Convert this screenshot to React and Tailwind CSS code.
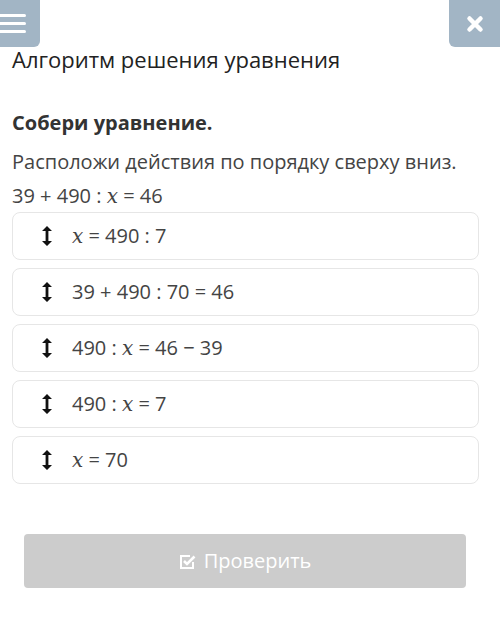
import React from "react";

const X = () => (
  <span style={{ fontFamily: '"DejaVu Serif", "Liberation Serif", serif' }} className="italic">x</span>
);

const Arrow = () => (
  <svg width="10" height="20" viewBox="0 0 10 20" className="shrink-0">
    <path d="M5 0 L10 5 L6.4 5 L6.4 15 L10 15 L5 20 L0 15 L3.6 15 L3.6 5 L0 5 Z" fill="#111" />
  </svg>
);

const rows = [
  <><X /> = 490 : 7</>,
  <>39 + 490 : 70 = 46</>,
  <>490 : <X /> = 46 − 39</>,
  <>490 : <X /> = 7</>,
  <><X /> = 70</>,
];

export default function App() {
  return (
    <div className="w-[500px] h-[622px] bg-white overflow-hidden" style={{ fontFamily: '"Open Sans", "Noto Sans", sans-serif' }}>
      <div className="flex justify-between h-[47px]">
        <div className="w-[40px] h-[47px] bg-[#a2b5c5] rounded-br-[6px] flex flex-col justify-center gap-[5px]">
          <div className="w-[26px] h-[3px] bg-white rounded-r-sm" />
          <div className="w-[26px] h-[3px] bg-white rounded-r-sm" />
          <div className="w-[26px] h-[3px] bg-white rounded-r-sm" />
        </div>
        <div className="w-[51px] h-[47px] bg-[#a2b5c5] rounded-bl-[6px] flex items-center justify-center">
          <svg width="18" height="18" viewBox="0 0 18 18">
            <path d="M3.5 3.5 L14.5 14.5 M14.5 3.5 L3.5 14.5" stroke="white" strokeWidth="4.5" strokeLinecap="round" />
          </svg>
        </div>
      </div>
      <div className="px-[12px]">
        <div className="-mt-[3px] text-[22px] leading-[30px] text-[#222]">Алгоритм решения уравнения</div>
        <div className="mt-[35px] text-[20px] leading-[28px] font-bold text-[#333]">Собери уравнение.</div>
        <div className="mt-[11px] text-[20px] leading-[28px] text-[#444]">Расположи действия по порядку сверху вниз.</div>
        <div className="mt-[7px] text-[20px] leading-[26px] text-[#444]">39 + 490 : <X /> = 46</div>
        <div className="mt-[3px] w-[467px] flex flex-col gap-[8px]">
          {rows.map((r, i) => (
            <div key={i} className="h-[48px] border border-[#e6e6e6] rounded-[8px] flex items-center pl-[29px]">
              <Arrow />
              <div className="ml-[20px] text-[20px] text-[#444]">{r}</div>
            </div>
          ))}
        </div>
      </div>
      <div className="mt-[50px] ml-[24px] w-[442px] h-[54px] bg-[#cccccc] rounded-[4px] flex items-center justify-center text-white text-[20px]">
        <svg width="17" height="17" viewBox="0 0 17 17" className="mr-[8px] shrink-0 block">
          <path d="M14 9 V15 H2 V3 H11" fill="none" stroke="white" strokeWidth="2" />
          <path d="M5 8 L8 11 L15.5 3.5" fill="none" stroke="white" strokeWidth="2.6" />
        </svg>
        <span>Проверить</span>
      </div>
    </div>
  );
}
